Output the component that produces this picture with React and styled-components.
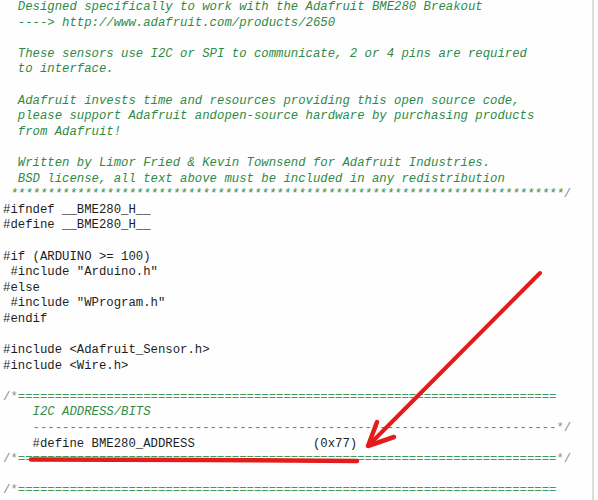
import React from "react";
import styled, { createGlobalStyle } from "styled-components";

const Global = createGlobalStyle`
  html, body { margin: 0; padding: 0; background: #ffffff; }
  body { width: 598px; height: 500px; overflow: hidden; }
`;

const Page = styled.div`
  position: relative;
  width: 598px;
  height: 500px;
  background: #fff;
  overflow: hidden;
`;

const Editor = styled.div`
  width: 594px;
  height: 500px;
  box-sizing: border-box;
  border-right: 2px solid #dcdcdc;
  padding: 0 0 0 3px;
  background: #fefefe;
`;

const Line = styled.div`
  height: 15.6px;
  line-height: 15.6px;
  white-space: pre;
  font-family: "Liberation Mono", "Courier New", monospace;
  font-size: 12.3px;
  color: ${(p) => (p.$comment ? "#2f8a47" : "#1e1e1e")};
  font-style: ${(p) => (p.$comment ? "italic" : "normal")};
`;

const Delim = styled.span`
  color: #8a8f8c;
  font-style: normal;
`;

const Eq = styled.span`
  color: #3d9a5a;
  font-style: normal;
`;

const Overlay = styled.svg`
  position: absolute;
  left: 0;
  top: 0;
  pointer-events: none;
`;

const eqs = "=".repeat(73);
const dashes = "-".repeat(71);
const stars = "*".repeat(75);

export default function App() {
  return (
    <Page>
      <Global />
      <Editor>
        <Line $comment>{"  Designed specifically to work with the Adafruit BME280 Breakout"}</Line>
        <Line $comment>{"  ----> http://www.adafruit.com/products/2650"}</Line>
        <Line $comment>{" "}</Line>
        <Line $comment>{"  These sensors use I2C or SPI to communicate, 2 or 4 pins are required"}</Line>
        <Line $comment>{"  to interface."}</Line>
        <Line $comment>{" "}</Line>
        <Line $comment>{"  Adafruit invests time and resources providing this open source code,"}</Line>
        <Line $comment>{"  please support Adafruit andopen-source hardware by purchasing products"}</Line>
        <Line $comment>{"  from Adafruit!"}</Line>
        <Line $comment>{" "}</Line>
        <Line $comment>{"  Written by Limor Fried & Kevin Townsend for Adafruit Industries."}</Line>
        <Line $comment>{"  BSD license, all text above must be included in any redistribution"}</Line>
        <Line $comment>
          {" " + stars}
          <Delim>/</Delim>
        </Line>
        <Line>{"#ifndef __BME280_H__"}</Line>
        <Line>{"#define __BME280_H__"}</Line>
        <Line>{" "}</Line>
        <Line>{"#if (ARDUINO >= 100)"}</Line>
        <Line>{' #include "Arduino.h"'}</Line>
        <Line>{"#else"}</Line>
        <Line>{' #include "WProgram.h"'}</Line>
        <Line>{"#endif"}</Line>
        <Line>{" "}</Line>
        <Line>{"#include <Adafruit_Sensor.h>"}</Line>
        <Line>{"#include <Wire.h>"}</Line>
        <Line>{" "}</Line>
        <Line $comment>
          <Delim>/*</Delim>
          <Eq>{eqs}</Eq>
        </Line>
        <Line $comment>{"    I2C ADDRESS/BITS"}</Line>
        <Line $comment>
          <Eq>{"    " + dashes}</Eq>
          <Delim>*/</Delim>
        </Line>
        <Line>{"    #define BME280_ADDRESS                (0x77)"}</Line>
        <Line $comment>
          <Delim>/*</Delim>
          <Eq>{eqs}</Eq>
          <Delim>*/</Delim>
        </Line>
        <Line>{" "}</Line>
        <Line $comment>
          <Delim>/*</Delim>
          <Eq>{eqs}</Eq>
        </Line>
      </Editor>
      <Overlay width="598" height="500" viewBox="0 0 598 500">
        <g stroke="#e41b1b" strokeLinecap="round" strokeLinejoin="round" fill="none">
          <line x1="540" y1="273" x2="369" y2="445" strokeWidth="4" />
          <polyline points="377,422 368,446 394,437" strokeWidth="4.5" />
          <path d="M31 459.5 L200 460 L357 461" strokeWidth="4.5" />
        </g>
      </Overlay>
    </Page>
  );
}
